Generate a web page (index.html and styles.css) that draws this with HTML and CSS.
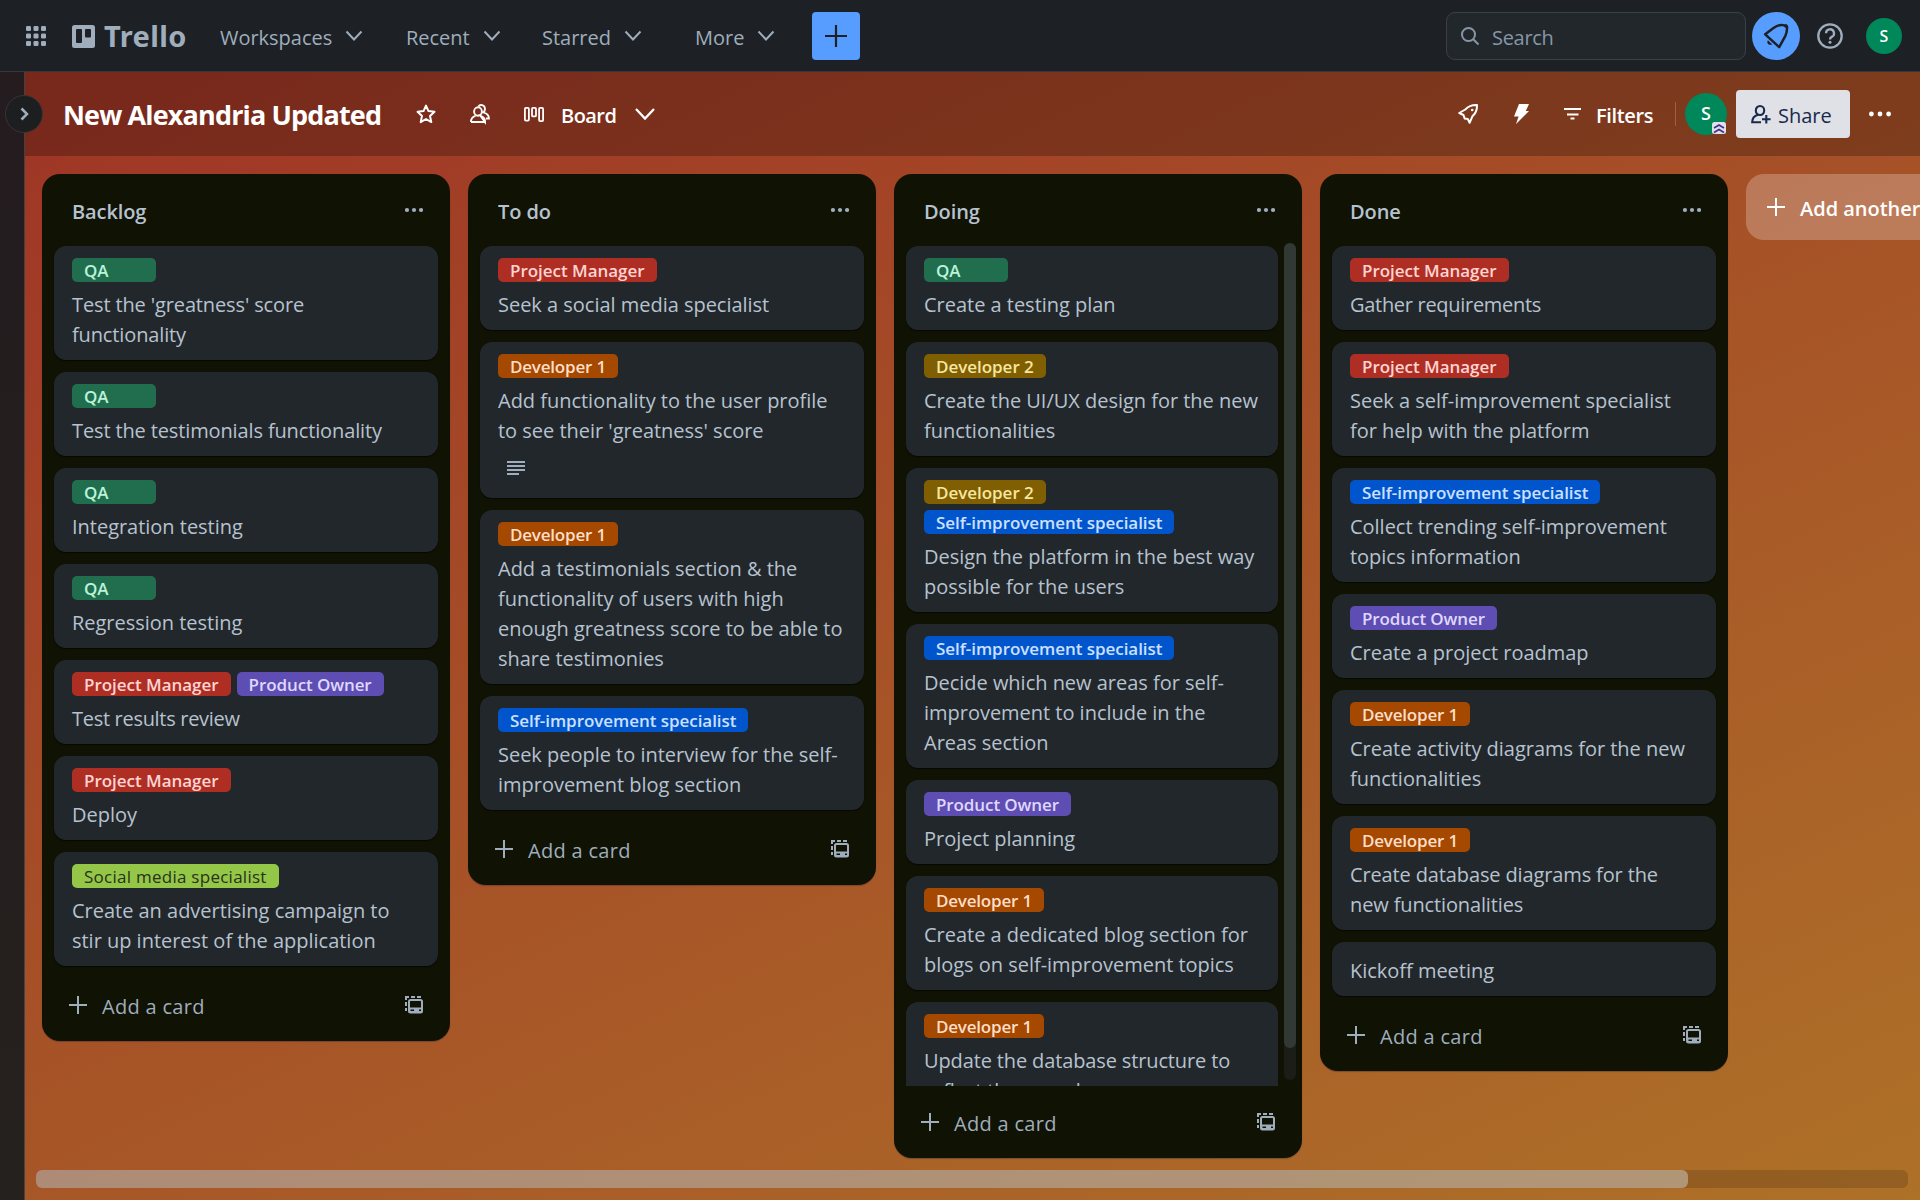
FILE: index.html
```
<!DOCTYPE html>
<html lang="en">
<head>
<meta charset="utf-8">
<title>New Alexandria Updated | Trello</title>
<link rel="stylesheet" href="styles.css">
</head>
<body>
<svg class="sprite" aria-hidden="true">
  <symbol id="chev" viewBox="0 0 18 12"><path d="M1.5 1.5 9 9.5 16.500 1.500" fill="none" stroke="currentColor" stroke-width="2"/></symbol>
  <symbol id="plus" viewBox="0 0 18 18"><path d="M9 0v18M0 9h18" fill="none" stroke="currentColor" stroke-width="2"/></symbol>
  <symbol id="dots" viewBox="0 0 18 6"><circle cx="2" cy="3" r="2.100"/><circle cx="9" cy="3" r="2.100"/><circle cx="16" cy="3" r="2.100"/></symbol>
  <symbol id="template" viewBox="0 0 18 18"><g fill="none" stroke="currentColor" stroke-width="2"><path d="M1 4V1h3M6 1h4M12 1h4M1 6v4M1 12v3"/><rect x="4" y="4" width="13" height="12.500" rx="1.500"/></g><path d="M4 11.500h13V16.500H4z"/><path d="M5.500 13.500h3.500v1.500H5.500zM14 13.500h2v1.500h-2z" fill="#101204"/></symbol>
  <symbol id="lines" viewBox="0 0 18 15"><path d="M0 1h18M0 5h18M0 9h18M0 13h12" fill="none" stroke="currentColor" stroke-width="2"/></symbol>
</svg>

<header class="topbar">
  <svg class="apps" viewBox="0 0 20 20"><g><rect width="5" height="5" rx="1.300"/><rect x="7.500" width="5" height="5" rx="1.300"/><rect x="15" width="5" height="5" rx="1.300"/><rect y="7.500" width="5" height="5" rx="1.300"/><rect x="7.500" y="7.500" width="5" height="5" rx="1.300"/><rect x="15" y="7.500" width="5" height="5" rx="1.300"/><rect y="15" width="5" height="5" rx="1.300"/><rect x="7.500" y="15" width="5" height="5" rx="1.300"/><rect x="15" y="15" width="5" height="5" rx="1.300"/></g></svg>
  <div class="brand"><svg viewBox="0 0 23 23"><path fill-rule="evenodd" d="M2.500 0h18A2.500 2.500 0 0 1 23 2.500v18a2.500 2.500 0 0 1-2.500 2.500h-18A2.500 2.500 0 0 1 0 20.500v-18A2.500 2.500 0 0 1 2.500 0zM5 4a1 1 0 0 0-1 1v12a1 1 0 0 0 1 1h4a1 1 0 0 0 1-1V5a1 1 0 0 0-1-1zM14 4a1 1 0 0 0-1 1v6.500a1 1 0 0 0 1 1h4a1 1 0 0 0 1-1V5a1 1 0 0 0-1-1z"/></svg><span>Trello</span></div>
  <nav class="menu">
    <a><span>Workspaces</span><svg><use href="#chev"/></svg></a>
    <a><span>Recent</span><svg><use href="#chev"/></svg></a>
    <a><span>Starred</span><svg><use href="#chev"/></svg></a>
    <a><span>More</span><svg><use href="#chev"/></svg></a>
    <button class="create"><svg viewBox="0 0 22 22"><path d="M11 0v22M0 11h22" stroke="currentColor" stroke-width="2.200"/></svg></button>
  </nav>
  <div class="search"><svg viewBox="0 0 18 18"><g fill="none" stroke="currentColor" stroke-width="2"><circle cx="7.500" cy="7.500" r="6.500"/><path d="m12 12 5.500 5.500"/></g></svg><span>Search</span></div>
  <div class="notify"><svg viewBox="0 0 24 24"><path d="M1.200 10.300 15.200 23.200 21.500 11.600Q23.300 7.500 23 2.600Q20.600.8 17.400.9Q13.300 1.200 9.500 4.100Z" fill="none" stroke="currentColor" stroke-width="2.500" stroke-linejoin="round"/><path d="m20.500 3 2.500-2.200"  stroke="currentColor" stroke-width="2.500"/><path d="M4 16.200c-2 2.600.7 5.800 4.300 4.200z"/></svg></div>
  <svg class="help" viewBox="0 0 26 26"><circle cx="13" cy="13" r="11.700" fill="none" stroke="currentColor" stroke-width="2.300"/><path d="M9 10.200a4 4 0 1 1 5.700 3.700c-1.200.6-1.700 1.200-1.700 2.500" fill="none" stroke="currentColor" stroke-width="2.300"/><circle cx="13" cy="19.200" r="1.500"/></svg>
  <div class="avatar">S</div>
</header>

<div class="workspace">
  <aside class="rail"><button class="expand"><svg viewBox="0 0 9 14"><path d="m1.500 1.500 5.500 5.500-5.500 5.500" fill="none" stroke="currentColor" stroke-width="2.500"/></svg></button></aside>
  <main class="board">
    <div class="boardbar">
      <h1>New Alexandria Updated</h1>
      <svg class="star" viewBox="0 0 20 20"><path d="m10 1.600 2.500 5.500 6 .7-4.500 4.100 1.300 6.200-5.300-3.100-5.300 3.100L6 11.900 1.500 7.800l6-.7z" fill="none" stroke="currentColor" stroke-width="2" stroke-linejoin="round"/></svg>
      <svg class="people" viewBox="0 0 20 20"><g fill="none" stroke="currentColor" stroke-width="1.900"><ellipse cx="8" cy="7.500" rx="3.900" ry="4.200"/><path d="M1 18c0-3.500 1.800-5.500 4.500-6.200M10.500 11.800c2.700.7 4.500 2.700 4.500 6.200zM15 18H1M8.500 2.400c1-1.700 3.900-2 5.500-.2 1.500 1.800 1.200 4.800-.6 6.200 3.400 1 5.600 3 5.500 6.100h-3"/></g></svg>
      <svg class="cols" viewBox="0 0 20 15"><g fill="none" stroke="currentColor" stroke-width="1.800"><rect x=".9" y=".9" width="4" height="12.700" rx="1"/><rect x="8" y=".9" width="4" height="8.500" rx="1"/><rect x="15.100" y=".9" width="4" height="13.200" rx="1"/></g></svg>
      <span class="view">Board</span>
      <svg class="viewchev" viewBox="0 0 20 12"><path d="m1 1 9 9.500L19 1" fill="none" stroke="currentColor" stroke-width="2.300"/></svg>
      <svg class="launch" viewBox="0 0 20 20"><path d="M1.200 9 7.300 5.500C10.500 2 14.500.8 19 1c.2 4.500-1 8.200-4.600 11.300L11.600 18.800 9.800 15 6.700 14.600 5.500 11z" fill="none" stroke="currentColor" stroke-width="2" stroke-linejoin="round"/><circle cx="14.200" cy="6" r="1.300"/></svg>
      <svg class="bolt" viewBox="0 0 16 20"><path d="M5 0h10l-3.200 7H15L2 20l2.600-7.500H0z"/></svg>
      <svg class="filter" viewBox="0 0 17 12"><path d="M0 1h17M3 6.500h11.500" stroke="currentColor" stroke-width="2"/><path d="M6.500 10.500h4" stroke="currentColor" stroke-width="2"/></svg>
      <span class="filters">Filters</span>
      <i class="rule"></i>
      <div class="member">S<svg viewBox="0 0 14 12"><rect width="14" height="12" rx="2.500" fill="#dfe1e6"/><path d="m2 6 5-3 5 3M2 10.500l5-3 5 3" fill="none" stroke="#403294" stroke-width="1.700"/></svg></div>
      <button class="share"><svg viewBox="0 0 20 19"><g fill="none" stroke="currentColor" stroke-width="2.100"><ellipse cx="9" cy="5.500" rx="4.200" ry="4.500"/><path d="M10 17.300H1.200c0-3.600 1.500-6.300 5.800-7.500M15.300 10v8.500M11 14.200h8.600"/></g></svg><span>Share</span></button>
      <svg class="more" viewBox="0 0 22 6"><circle cx="2.400" cy="3" r="2.400"/><circle cx="11" cy="3" r="2.400"/><circle cx="19.600" cy="3" r="2.400"/></svg>
    </div>

    <div class="lists">
      <section class="list">
        <header><h2>Backlog</h2><svg><use href="#dots"/></svg></header>
        <div class="cards">
          <article><div class="labels"><b class="green">QA</b></div><p class="tight">Test the 'greatness' score<br>functionality</p></article>
          <article><div class="labels"><b class="green">QA</b></div><p class="tight">Test the testimonials functionality</p></article>
          <article><div class="labels"><b class="green">QA</b></div><p>Integration testing</p></article>
          <article><div class="labels"><b class="green">QA</b></div><p>Regression testing</p></article>
          <article><div class="labels"><b class="red">Project Manager</b><b class="purple">Product Owner</b></div><p class="tighter">Test results review</p></article>
          <article><div class="labels"><b class="red">Project Manager</b></div><p>Deploy</p></article>
          <article><div class="labels"><b class="lime">Social media specialist</b></div><p>Create an advertising campaign to<br>stir up interest of the application</p></article>
        </div>
        <footer><svg class="add"><use href="#plus"/></svg><span>Add a card</span><svg class="tpl"><use href="#template"/></svg></footer>
      </section>

      <section class="list">
        <header><h2>To do</h2><svg><use href="#dots"/></svg></header>
        <div class="cards">
          <article><div class="labels"><b class="red">Project Manager</b></div><p>Seek a social media specialist</p></article>
          <article><div class="labels"><b class="orange">Developer 1</b></div><p>Add functionality to the user profile<br>to see their 'greatness' score</p><div class="badges"><svg><use href="#lines"/></svg></div></article>
          <article><div class="labels"><b class="orange">Developer 1</b></div><p>Add a testimonials section &amp; the<br>functionality of users with high<br>enough greatness score to be able to<br>share testimonies</p></article>
          <article><div class="labels"><b class="blue">Self-improvement specialist</b></div><p>Seek people to interview for the self-<br>improvement blog section</p></article>
        </div>
        <footer><svg class="add"><use href="#plus"/></svg><span>Add a card</span><svg class="tpl"><use href="#template"/></svg></footer>
      </section>

      <section class="list">
        <header><h2>Doing</h2><svg><use href="#dots"/></svg></header>
        <div class="scroller">
          <div class="cards">
            <article><div class="labels"><b class="green">QA</b></div><p>Create a testing plan</p></article>
            <article><div class="labels"><b class="yellow">Developer 2</b></div><p>Create the UI/UX design for the new<br>functionalities</p></article>
            <article><div class="labels"><b class="yellow">Developer 2</b><b class="blue">Self-improvement specialist</b></div><p>Design the platform in the best way<br>possible for the users</p></article>
            <article><div class="labels"><b class="blue">Self-improvement specialist</b></div><p>Decide which new areas for self-<br>improvement to include in the<br>Areas section</p></article>
            <article><div class="labels"><b class="purple">Product Owner</b></div><p>Project planning</p></article>
            <article><div class="labels"><b class="orange">Developer 1</b></div><p>Create a dedicated blog section for<br>blogs on self-improvement topics</p></article>
            <article><div class="labels"><b class="orange">Developer 1</b></div><p class="tight">Update the database structure to<br>reflect the new changes</p></article>
          </div>
          <div class="vtrack"><i></i></div>
        </div>
        <footer><svg class="add"><use href="#plus"/></svg><span>Add a card</span><svg class="tpl"><use href="#template"/></svg></footer>
      </section>

      <section class="list">
        <header><h2>Done</h2><svg><use href="#dots"/></svg></header>
        <div class="cards">
          <article><div class="labels"><b class="red">Project Manager</b></div><p class="tighter">Gather requirements</p></article>
          <article><div class="labels"><b class="red">Project Manager</b></div><p>Seek a self-improvement specialist<br>for help with the platform</p></article>
          <article><div class="labels"><b class="blue">Self-improvement specialist</b></div><p>Collect trending self-improvement<br>topics information</p></article>
          <article><div class="labels"><b class="purple">Product Owner</b></div><p>Create a project roadmap</p></article>
          <article><div class="labels"><b class="orange">Developer 1</b></div><p>Create activity diagrams for the new<br>functionalities</p></article>
          <article><div class="labels"><b class="orange">Developer 1</b></div><p class="tight">Create database diagrams for the<br>new functionalities</p></article>
          <article><p>Kickoff meeting</p></article>
        </div>
        <footer><svg class="add"><use href="#plus"/></svg><span>Add a card</span><svg class="tpl"><use href="#template"/></svg></footer>
      </section>

      <div class="addlist"><svg><use href="#plus"/></svg><span>Add another list</span></div>
    </div>
    <div class="htrack"><i></i></div>
  </main>
</div>
</body>
</html>
```
FILE: styles.css
```
* { box-sizing: border-box; }
html, body { margin: 0; height: 1200px; overflow: hidden; }
body {
  width: 1920px;
  display: flex;
  flex-direction: column;
  font: 400 20px/30px "Open Sans", "Noto Sans", sans-serif;
  letter-spacing: -0.02px;
  color: #b6c2cf;
  background: #1d2125;
}
svg { display: block; flex: none; fill: currentColor; overflow: visible; }
button { border: 0; padding: 0; font: inherit; letter-spacing: inherit; }
h1, h2, p { margin: 0; }
.sprite { width: 0; height: 0; position: absolute; }

/* Top navigation */
.topbar {
  height: 72px;
  flex: none;
  display: flex;
  align-items: center;
  padding: 0 18px 0 26px;
  background: #1d2125;
  border-bottom: 1px solid #36383b;
  color: #9fadbc;
}
.topbar > * { margin-top: 1px; }
.apps { width: 20px; height: 20px; }
.brand { width: 149px; margin-left: 26px; display: flex; align-items: center; gap: 9px; }
.brand svg { width: 23px; height: 23px; }
.brand span { font: 700 29px/30px "Noto Sans", sans-serif; letter-spacing: 0.4px; }
.menu {
  display: grid;
  grid-template-columns: 186px 136px 153px 116px 48px;
  align-items: center;
  font-weight: 500;
}
.menu a { display: flex; align-items: center; gap: 13px; margin-left: -1px; }
.menu a span, .search span { padding-top: 3px; }
.menu a svg { width: 18px; height: 12px; }
.create {
  width: 48px;
  height: 48px;
  border-radius: 4px;
  background: #579dff;
  color: #1d2125;
  display: grid;
  place-items: center;
}
.create svg { width: 22px; height: 22px; }
.search {
  width: 300px;
  height: 48px;
  margin-left: auto;
  padding-left: 14px;
  display: flex;
  align-items: center;
  gap: 13px;
  border: 1px solid #38424b;
  border-radius: 9px;
  background: #22272b;
  color: #8696a7;
  letter-spacing: -0.3px;
}
.search svg { width: 18px; height: 18px; }
.notify {
  width: 48px;
  height: 48px;
  margin-left: 6px;
  border-radius: 50%;
  background: #579dff;
  color: #1d2125;
  display: grid;
  place-items: center;
}
.notify svg { width: 24px; height: 24px; }
.help { width: 26px; height: 26px; margin-left: 17px; }
.avatar, .member {
  border-radius: 50%;
  background: #00875a;
  color: #fff;
  font-weight: 600;
  text-align: center;
}
.avatar { width: 36px; height: 36px; margin-left: 23px; font-size: 16px; line-height: 36px; }

/* Board canvas */
.workspace {
  flex: 1;
  min-height: 0;
  display: flex;
  background: linear-gradient(155deg, #9f3426, #ae7128);
}
.rail {
  width: 25px;
  flex: none;
  padding: 23px 0 0 5px;
  background: linear-gradient(#241c1f, #25211e);
  border-right: 1px solid rgba(255, 255, 255, .16);
}
.expand {
  position: relative;
  z-index: 2;
  width: 38px;
  height: 38px;
  border: 1px solid #3a3234;
  border-radius: 50%;
  background: #1d1e20;
  color: #9fadbc;
  display: grid;
  place-items: center;
}
.expand svg { width: 9px; height: 14px; }
.board { flex: 1; min-width: 0; overflow: hidden; display: flex; flex-direction: column; }
.boardbar {
  height: 84px;
  flex: none;
  display: flex;
  align-items: center;
  padding: 0 29px 0 38px;
  background: rgba(0, 0, 0, .24);
  color: #fff;
}
.boardbar h1 { width: 353px; padding-top: 1px; font-size: 27px; line-height: 36px; font-weight: 700; letter-spacing: -0.86px; white-space: nowrap; }
.star, .people, .launch { width: 20px; height: 20px; }
.people { margin-left: 34px; }
.cols { width: 20px; height: 15px; margin-left: 34px; }
.view { width: 74px; margin-left: 17px; padding-top: 3px; font-weight: 600; letter-spacing: -0.55px; }
.viewchev { width: 20px; height: 12px; margin-right: auto; }
.bolt { width: 16px; height: 20px; margin-left: 36px; }
.filter { width: 17px; height: 12px; margin-left: 34px; }
.filters { width: 79px; margin-left: 15px; padding-top: 3px; font-weight: 600; letter-spacing: -0.35px; }
.rule { width: 1px; height: 24px; background: rgba(255, 255, 255, .2); }
.member { position: relative; width: 42px; height: 42px; margin-left: 9px; font-size: 18px; line-height: 41px; }
.member svg { position: absolute; right: 1px; bottom: 1px; width: 14px; height: 12px; }
.share {
  width: 114px;
  height: 48px;
  margin-left: 9px;
  padding-left: 15px;
  display: flex;
  align-items: center;
  gap: 7px;
  border-radius: 4px;
  background: #dfe1e6;
  color: #172b4d;
  font-weight: 500;
}
.share span { padding-top: 3px; }
.share svg { width: 20px; height: 19px; }
.more { width: 22px; height: 6px; margin-left: 19px; }

/* Lists */
.lists { flex: 1; min-height: 0; display: flex; align-items: flex-start; gap: 18px; padding: 18px 0 0 17px; }
.list {
  width: 408px;
  flex: none;
  border-radius: 18px;
  background: #101204;
  box-shadow: 0 1px 1px rgba(9, 30, 66, .3);
}
.list > header { height: 72px; display: flex; justify-content: space-between; padding: 23px 27px 0 30px; }
.list h2 { font-size: 20px; line-height: 30px; font-weight: 600; letter-spacing: -0.1px; }
.list > header svg { width: 18px; height: 6px; margin-top: 10px; color: #9fadbc; }
.cards { display: flex; flex-direction: column; gap: 12px; padding: 0 12px 3px; }
.cards article {
  padding: 12px 18px;
  border-radius: 12px;
  background: #22272b;
  box-shadow: 0 1px 1px rgba(3, 4, 4, .7);
}
.cards p { padding-top: 2px; margin-bottom: -2px; white-space: nowrap; }
.cards p.tight { letter-spacing: -0.13px; }
.cards p.tighter { letter-spacing: -0.3px; }
.labels { display: flex; flex-wrap: wrap; gap: 6px; margin-bottom: 6px; }
.labels b {
  min-width: 84px;
  height: 24px;
  padding: 1px 12px 0;
  border-radius: 5px;
  font-size: 17px;
  line-height: 24px;
  font-weight: 600;
  letter-spacing: -0.03px;
}
.labels .green { background: #216e4e; color: #baf3db; }
.labels .red { background: #ae2e24; color: #ffd5d2; }
.labels .orange { background: #a54800; color: #fedec8; letter-spacing: -0.2px; }
.labels .yellow { background: #7f5f01; color: #f8e6a0; }
.labels .blue { background: #0055cc; color: #cce0ff; letter-spacing: -0.05px; }
.labels .purple { background: #5e4db2; color: #dfd8fd; letter-spacing: -0.1px; }
.labels .lime { background: #94c748; color: #28311b; font-weight: 500; letter-spacing: 0.26px; }
.badges { height: 42px; padding: 17px 0 0 9px; color: #9fadbc; }
.badges svg { width: 18px; height: 15px; }
.list > footer { height: 72px; display: flex; align-items: center; padding: 0 27px; color: #9fadbc; font-weight: 500; letter-spacing: 0.3px; }
.list > footer span { margin-left: 15px; padding-top: 3px; }
.add, .tpl { width: 18px; height: 18px; }
.tpl { margin-left: auto; }
.scroller { height: 843px; display: flex; overflow: hidden; margin-top: -3px; }
.scroller .cards { width: 396px; padding-top: 3px; }
.scroller .cards article { width: 372px; }
.vtrack { width: 12px; height: 837px; margin: 0 6px 0 -6px; border-radius: 6px; background: #1b1d16; }
.vtrack i { display: block; height: 805px; border-radius: 6px; background: #323934; }
.addlist {
  width: 408px;
  height: 66px;
  flex: none;
  display: flex;
  align-items: center;
  gap: 15px;
  padding-left: 21px;
  border-radius: 18px;
  background: rgba(255, 255, 255, .24);
  color: #fff;
  font-weight: 600;
}
.addlist svg { width: 18px; height: 18px; }
.addlist span { padding-top: 3px; }
.htrack { height: 18px; flex: none; margin: 0 12px 12px 11px; border-radius: 6px; background: rgba(0, 0, 0, .15); }
.htrack i { display: block; width: 1652px; height: 18px; border-radius: 6px; background: rgba(220, 230, 235, .42); }
```
